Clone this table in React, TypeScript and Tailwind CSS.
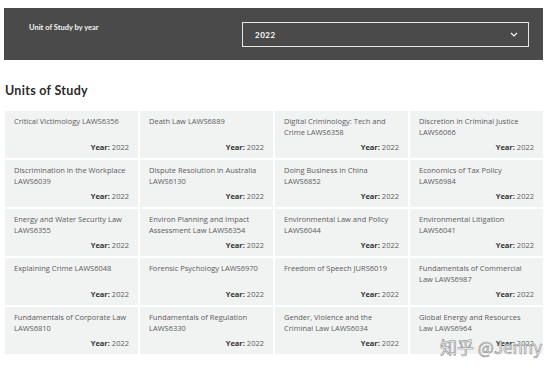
import React from "react";

const units: string[] = [
  "Critical Victimology LAWS6356",
  "Death Law LAWS6889",
  "Digital Criminology: Tech and Crime LAWS6358",
  "Discretion in Criminal Justice LAWS6066",
  "Discrimination in the Workplace LAWS6039",
  "Dispute Resolution in Australia LAWS6130",
  "Doing Business in China LAWS6852",
  "Economics of Tax Policy LAWS6984",
  "Energy and Water Security Law LAWS6355",
  "Environ Planning and Impact Assessment Law LAWS6354",
  "Environmental Law and Policy LAWS6044",
  "Environmental Litigation LAWS6041",
  "Explaining Crime LAWS6048",
  "Forensic Psychology LAWS6970",
  "Freedom of Speech JURS6019",
  "Fundamentals of Commercial Law LAWS6987",
  "Fundamentals of Corporate Law LAWS6810",
  "Fundamentals of Regulation LAWS6330",
  "Gender, Violence and the Criminal Law LAWS6034",
  "Global Energy and Resources Law LAWS6964",
];

export default function App() {
  return (
    <div
      className="relative w-[554px] h-[372px] bg-white overflow-hidden"
      style={{ fontFamily: "Lato, 'Open Sans', sans-serif" }}
    >
      <div className="ml-[4px] mt-[8px] w-[539px] h-[52px] bg-[#4a4a4a] flex">
        <div className="pl-[25px] pt-[14px] text-[7.5px] font-bold text-[#f2f2f2] w-[238px]">
          Unit of Study by year
        </div>
        <div className="mt-[14px] w-[287px] h-[25px] border-[1.5px] border-[#e6e6e6] flex items-center pl-[12px] pr-[10px]">
          <span className="text-[8px] font-bold text-white tracking-[0.5px]">2022</span>
          <svg className="ml-auto" width="8" height="5" viewBox="0 0 8 5">
            <path d="M1 1 L4 4 L7 1" stroke="#ffffff" strokeWidth="1.1" fill="none" />
          </svg>
        </div>
      </div>
      <h2 className="ml-[5px] mt-[22px] text-[12.5px] font-bold text-[#2b2b2b] leading-[18px] tracking-[0.3px]">
        Units of Study
      </h2>
      <div
        className="ml-[5px] mt-[11px] w-[538px] grid grid-cols-4 gap-[2px]"
        style={{ fontFamily: "'Open Sans', Lato, sans-serif" }}
      >
        {units.map((u) => (
          <div
            key={u}
            className="h-[47px] bg-[#f1f2f2] px-[9px] pt-[5px] pb-[5px] flex flex-col"
          >
            <div className="text-[7.5px] leading-[11px] text-[#5c5c5c]">{u}</div>
            <div className="mt-auto text-right text-[7.5px] leading-[11px] text-[#5c5c5c]">
              <span className="font-bold text-[#333]">Year:</span> 2022
            </div>
          </div>
        ))}
      </div>
      <div
        className="absolute left-[440px] top-[336px] text-[17px] leading-[22px] text-white/80 [-webkit-text-stroke:0.6px_#8a8a8a]"
        style={{ fontFamily: "'Noto Sans CJK SC', 'Liberation Sans', sans-serif" }}
      >
        知乎 @Jenny
      </div>
    </div>
  );
}
